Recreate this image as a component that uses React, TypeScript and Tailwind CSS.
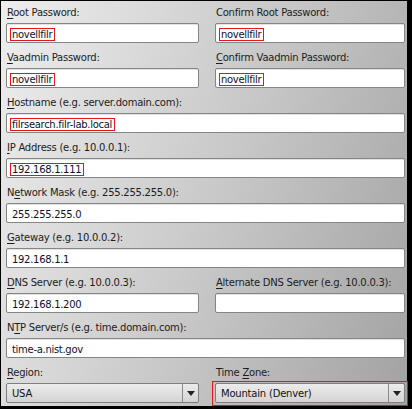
import React from "react";

type LabelProps = { before?: string; mn: string; after: string };

function Label({ before = "", mn, after }: LabelProps) {
  return (
    <div className="h-[14px] leading-[14px] pl-[1px] text-[10px] tracking-[-0.25px] text-[#1c1c1c] whitespace-nowrap">
      {before}
      <span className="underline underline-offset-[2px]">{mn}</span>
      {after}
    </div>
  );
}

function TextBox({ value, marked }: { value: string; marked?: boolean }) {
  return (
    <div className="h-[20px] bg-white border border-[#858585] rounded-[2px] pl-[3px] flex items-center shadow-[inset_0_1px_0_#e2e2e2]">
      <span
        className={
          "pl-[1px] pr-[2px] h-[13px] mt-[2px] leading-[12px] text-[10px] tracking-[-0.3px] text-[#10102a] whitespace-nowrap border " +
          (marked ? "border-[#e01818]" : "border-transparent")
        }
      >
        {value}
      </span>
    </div>
  );
}

function Select({ value, marked }: { value: string; marked?: boolean }) {
  return (
    <div className="relative">
      <div className="h-[20px] flex border border-[#7f7f7f] rounded-[2px] bg-linear-to-b from-[#ececec] to-[#d4d4d4]">
        <div className="flex-1 pl-[5px] flex items-center text-[10px] tracking-[-0.2px] text-[#111] whitespace-nowrap">{value}</div>
        <div className="w-[16px] border-l border-[#8a8a8a] flex items-center justify-center">
          <svg width="8" height="5" viewBox="0 0 8 5">
            <polygon points="0,0 8,0 4,5" fill="#222" />
          </svg>
        </div>
      </div>
      {marked && <div className="absolute -left-[3px] -right-[3px] -top-[2px] -bottom-[3px] border border-[#e01818]" />}
    </div>
  );
}

function Field({ label, children }: { label: React.ReactNode; children: React.ReactNode }) {
  return (
    <div className="flex flex-col gap-[3px] min-w-0">
      {label}
      {children}
    </div>
  );
}

const row = "grid grid-cols-[193px_minmax(0,1fr)] gap-x-[16px]";

export default function App() {
  return (
    <div className="w-[412px] h-[409px] bg-black pl-[1px] pt-[1px] pr-[5px] pb-[3px]" style={{ fontFamily: '"DejaVu Sans", sans-serif' }}>
      <div className="h-full bg-[linear-gradient(108deg,#eeeeee_0%,#c6c6c6_55%,#a2a2a2_100%)] pl-[5px] pr-[2px] pt-[5px] flex flex-col gap-[8px]">
        <div className={row}>
          <Field label={<Label mn="R" after="oot Password:" />}>
            <TextBox value="novellfilr" marked />
          </Field>
          <Field label={<Label mn="" after="Confirm Root Password:" />}>
            <TextBox value="novellfilr" marked />
          </Field>
        </div>
        <div className={row}>
          <Field label={<Label mn="V" after="aadmin Password:" />}>
            <TextBox value="novellfilr" marked />
          </Field>
          <Field label={<Label mn="C" after="onfirm Vaadmin Password:" />}>
            <TextBox value="novellfilr" marked />
          </Field>
        </div>
        <Field label={<Label mn="H" after="ostname (e.g. server.domain.com):" />}>
          <TextBox value="filrsearch.filr-lab.local" marked />
        </Field>
        <Field label={<Label mn="I" after="P Address (e.g. 10.0.0.1):" />}>
          <TextBox value="192.168.1.111" marked />
        </Field>
        <Field label={<Label before="N" mn="e" after="twork Mask (e.g. 255.255.255.0):" />}>
          <TextBox value="255.255.255.0" />
        </Field>
        <Field label={<Label mn="G" after="ateway (e.g. 10.0.0.2):" />}>
          <TextBox value="192.168.1.1" />
        </Field>
        <div className={row}>
          <Field label={<Label mn="D" after="NS Server (e.g. 10.0.0.3):" />}>
            <TextBox value="192.168.1.200" />
          </Field>
          <Field label={<Label mn="A" after="lternate DNS Server (e.g. 10.0.0.3):" />}>
            <TextBox value="" />
          </Field>
        </div>
        <Field label={<Label before="N" mn="T" after="P Server/s (e.g. time.domain.com):" />}>
          <TextBox value="time-a.nist.gov" />
        </Field>
        <div className={row}>
          <Field label={<Label mn="R" after="egion:" />}>
            <Select value="USA" />
          </Field>
          <Field label={<Label before="Time " mn="Z" after="one:" />}>
            <Select value="Mountain (Denver)" marked />
          </Field>
        </div>
      </div>
    </div>
  );
}
